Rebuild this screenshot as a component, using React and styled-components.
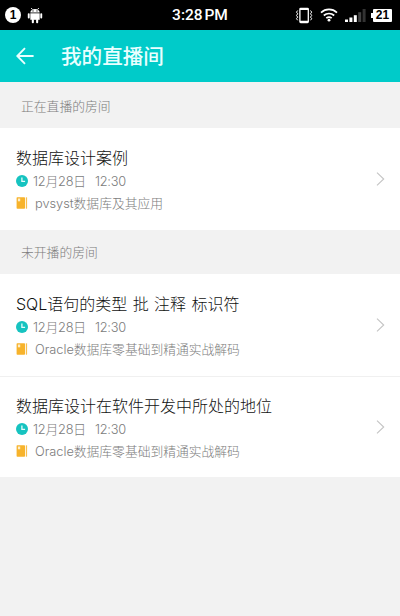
import React from "react";
import styled, { createGlobalStyle } from "styled-components";

const LIVE_ROOMS = [
  {
    id: 1,
    title: "数据库设计案例",
    date: "12月28日",
    time: "12:30",
    course: "pvsyst数据库及其应用",
  },
];

const WAITING_ROOMS = [
  {
    id: 2,
    title: "SQL语句的类型 批 注释 标识符",
    date: "12月28日",
    time: "12:30",
    course: "Oracle数据库零基础到精通实战解码",
  },
  {
    id: 3,
    title: "数据库设计在软件开发中所处的地位",
    date: "12月28日",
    time: "12:30",
    course: "Oracle数据库零基础到精通实战解码",
  },
];

const AndroidIcon = () => (
  <svg width="16" height="17" viewBox="0 0 16 17" fill="#fff">
    <path d="M4.2 1l1.2 1.5M11.8 1l-1.2 1.5" stroke="#fff" strokeWidth="0.9" />
    <path d="M3.3 5.6C3.5 3 5.4 1.9 8 1.9s4.5 1.1 4.7 3.7z" />
    <circle cx="6" cy="3.9" r="0.6" fill="#000" />
    <circle cx="10" cy="3.9" r="0.6" fill="#000" />
    <path d="M3.3 6.3h9.4v6.5H3.3z" />
    <rect x="0.8" y="6.2" width="1.9" height="5.3" rx="0.9" />
    <rect x="13.3" y="6.2" width="1.9" height="5.3" rx="0.9" />
    <rect x="4.8" y="12" width="2.1" height="4.2" rx="0.9" />
    <rect x="9.1" y="12" width="2.1" height="4.2" rx="0.9" />
  </svg>
);

const VibrateIcon = () => (
  <svg width="18" height="17" viewBox="0 0 18 17" fill="none" stroke="#fff">
    <rect x="4.9" y="1.3" width="8.4" height="14.2" rx="0.8" strokeWidth="1.3" />
    <path d="M5 2.2h8M5 14.6h8" strokeWidth="1.5" />
    <path
      d="M2.7 3.5l-1.2 1.6 1.2 1.7-1.2 1.6 1.2 1.7-1.2 1.6 1.2 1.6M15.5 3.5l1.2 1.6-1.2 1.7 1.2 1.6-1.2 1.7 1.2 1.6-1.2 1.6"
      strokeWidth="1"
    />
  </svg>
);

const WifiIcon = () => (
  <svg width="18" height="14" viewBox="0 0 18 14" fill="none" stroke="#fff">
    <path d="M1 4.6C5.6.4 12.4.4 17 4.6" strokeWidth="1.7" />
    <path d="M3.8 7.5c3-2.7 7.4-2.7 10.4 0" strokeWidth="1.7" />
    <path d="M6.3 10.2c1.6-1.4 3.8-1.4 5.4 0" strokeWidth="1.7" />
    <circle cx="9" cy="12.2" r="1.4" fill="#fff" stroke="none" />
  </svg>
);

const SignalIcon = () => (
  <svg width="21" height="13" viewBox="0 0 21 13" fill="#fff">
    <rect x="0" y="10.5" width="3" height="2.5" />
    <rect x="4.4" y="8.5" width="3" height="4.5" />
    <rect x="8.8" y="6.2" width="3" height="6.8" />
    <rect x="13.2" y="3.2" width="3" height="9.8" fill="#444" />
    <rect x="17.6" y="0" width="3" height="13" fill="#333" />
  </svg>
);

const BackIcon = () => (
  <svg width="18" height="18" viewBox="0 0 18 18" fill="none" stroke="#e9ffff">
    <path d="M17.6 9H1.6M9 1.2L1.3 9 9 16.8" strokeWidth="1.9" />
  </svg>
);

const ClockIcon = () => (
  <svg width="12" height="12" viewBox="0 0 12 12" fill="none">
    <circle cx="6" cy="6" r="6" fill="#16c3c0" />
    <path d="M5.9 2.6v3.7h3.2" stroke="#e6fbfa" strokeWidth="1.3" />
  </svg>
);

const BookIcon = () => (
  <svg width="12" height="12" viewBox="0 0 12 12">
    <rect x="0.6" y="0.3" width="8.4" height="11.4" rx="0.7" fill="#f7b32b" />
    <rect x="1.9" y="1.5" width="2.3" height="2.8" fill="#fdeecb" />
    <rect x="9.8" y="0.3" width="1.3" height="11.4" rx="0.4" fill="#f7bf50" />
  </svg>
);

const ArrowIcon = () => (
  <svg width="9" height="14" viewBox="0 0 9 14" fill="none" stroke="#c4c4c4">
    <path d="M1 0.7L7.7 7 1 13.3" strokeWidth="1.1" />
  </svg>
);

const RoomItem = ({ room }) => (
  <Room>
    <RoomInfo>
      <RoomTitle>{room.title}</RoomTitle>
      <RoomMeta>
        <ClockIcon />
        <RoomDate>
          {room.date}
          <RoomTime>{room.time}</RoomTime>
        </RoomDate>
      </RoomMeta>
      <RoomMeta>
        <BookIcon />
        <Course>{room.course}</Course>
      </RoomMeta>
    </RoomInfo>
    <ArrowIcon />
  </Room>
);

export default function App() {
  return (
    <Page>
      <GlobalStyle />
      <StatusBar>
        <StatusLeft>
          <NoticeBadge>1</NoticeBadge>
          <AndroidIcon />
        </StatusLeft>
        <StatusTime>3:28 PM</StatusTime>
        <StatusRight>
          <VibrateIcon />
          <WifiIcon />
          <SignalIcon />
          <Battery>21</Battery>
        </StatusRight>
      </StatusBar>
      <Header>
        <BackIcon />
        <HeaderTitle>我的直播间</HeaderTitle>
      </Header>

      <SectionTitle $height="46px" $top="2px">
        正在直播的房间
      </SectionTitle>
      <RoomList>
        {LIVE_ROOMS.map((room) => (
          <RoomItem key={room.id} room={room} />
        ))}
      </RoomList>

      <SectionTitle $height="44px" $top="1px">
        未开播的房间
      </SectionTitle>
      <RoomList>
        {WAITING_ROOMS.map((room) => (
          <RoomItem key={room.id} room={room} />
        ))}
      </RoomList>
    </Page>
  );
}

const GlobalStyle = createGlobalStyle`
  * {
    box-sizing: border-box;
  }
  body {
    margin: 0;
    background: #f2f2f2;
  }
  h1, h2, h3, p, ul {
    margin: 0;
    padding: 0;
    font-weight: inherit;
  }
  svg {
    display: block;
    flex-shrink: 0;
  }
`;

const Page = styled.main`
  width: 400px;
  min-height: 616px;
  background: #f2f2f2;
  font-family: Inter, "Noto Sans CJK SC", sans-serif;
  font-weight: 300;
`;

// 状态栏
const StatusBar = styled.div`
  display: grid;
  grid-template-columns: 1fr auto 1fr;
  align-items: center;
  height: 30px;
  padding: 0 8px 0 5px;
  background: #000;
  color: #fff;
  font-family: "Liberation Sans", sans-serif;
`;

const StatusLeft = styled.div`
  display: flex;
  align-items: center;
  gap: 6px;
`;

const NoticeBadge = styled.span`
  width: 16px;
  height: 16px;
  border-radius: 50%;
  background: #fff;
  color: #000;
  font-size: 12px;
  font-weight: 700;
  line-height: 16px;
  text-align: center;
`;

const StatusTime = styled.span`
  margin-left: 3px;
  font-family: Roboto, sans-serif;
  font-size: 15.5px;
  font-weight: 500;
  word-spacing: -2px;
`;

const StatusRight = styled.div`
  display: flex;
  align-items: center;
  justify-content: flex-end;
  gap: 7px;
`;

const Battery = styled.span`
  position: relative;
  width: 19px;
  height: 13px;
  border-radius: 1px;
  background: #fff;
  color: #000;
  font-size: 12px;
  font-weight: 700;
  line-height: 13px;
  text-align: center;

  &::before {
    content: "";
    position: absolute;
    left: -2px;
    top: 4px;
    width: 2px;
    height: 5px;
    background: #fff;
  }
`;

// 顶部标题
const Header = styled.header`
  display: flex;
  align-items: center;
  gap: 27px;
  height: 52px;
  padding-left: 16px;
  background: #00cbc9;
`;

const HeaderTitle = styled.h1`
  padding-top: 2px;
  color: #e9ffff;
  font-size: 20.6px;
  font-weight: 500;
  line-height: 30px;
`;

// 房间列表
const SectionTitle = styled.h2`
  height: ${(props) => props.$height};
  padding: ${(props) => props.$top} 0 0 21px;
  color: #7c7c7c;
  font-size: 12.8px;
  line-height: ${(props) => props.$height};
`;

const RoomList = styled.ul`
  background: #fff;
  list-style: none;
`;

const Room = styled.li`
  display: flex;
  align-items: center;
  justify-content: space-between;
  height: 102px;
  padding: 0 15px 0 16px;

  & + & {
    height: 101px;
    box-shadow: inset 0 1px #f0f0f0;
  }
`;

const RoomInfo = styled.div`
  padding-top: 2px;
`;

const RoomTitle = styled.h3`
  color: #111;
  font-size: 16px;
  line-height: 24px;
  word-spacing: 0.9px;
`;

const RoomMeta = styled.div`
  display: flex;
  align-items: center;
  height: 22px;
  color: #7c7c7c;
  font-size: 12.8px;
`;

const RoomDate = styled.p`
  margin-left: 5px;
  padding-top: 2px;
  line-height: 20px;
  letter-spacing: -0.2px;
`;

const RoomTime = styled.span`
  margin-left: 9px;
  letter-spacing: -0.25px;
`;

const Course = styled.p`
  margin-left: 7px;
  padding-top: 2px;
  line-height: 20px;
  letter-spacing: -0.02px;
`;
